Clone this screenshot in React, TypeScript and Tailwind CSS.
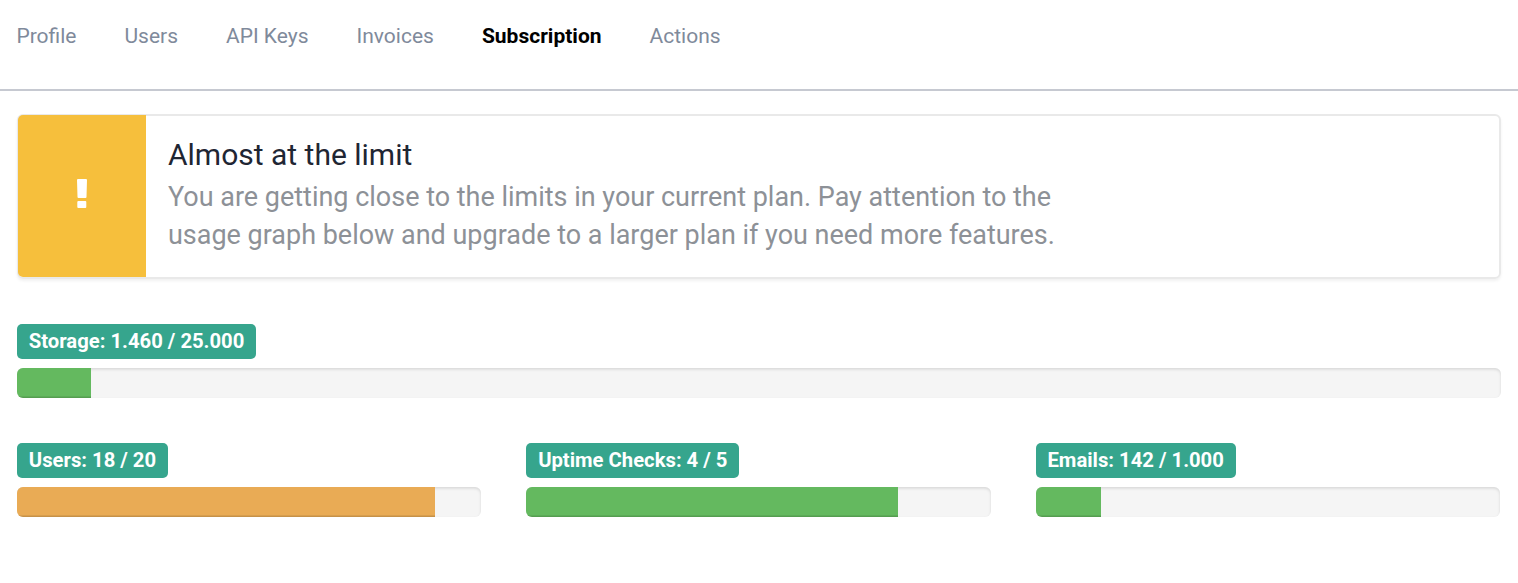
const tabs = [
  { label: 'Profile' },
  { label: 'Users' },
  { label: 'API Keys' },
  { label: 'Invoices' },
  { label: 'Subscription', active: true },
  { label: 'Actions' },
];

function Meter({ label, percent, warn = false }: { label: string; percent: number; warn?: boolean }) {
  return (
    <div>
      <span className="flex h-[35px] w-fit items-center rounded-[5px] bg-[#36a58d] px-[11.8px] text-[20.25px] leading-[35px] font-bold whitespace-nowrap text-white">
        {label}
      </span>
      <div className="mt-[9px] h-[30px] overflow-hidden rounded-[6px] bg-[#f5f5f5] shadow-[inset_0_1.5px_3px_rgba(0,0,0,0.12)]">
        <div
          className={`h-full shadow-[inset_0_-1.5px_0_rgba(0,0,0,0.15)] ${warn ? 'bg-[#e9ab55]' : 'bg-[#64b95f]'}`}
          style={{ width: `${percent}%` }}
        />
      </div>
    </div>
  );
}

export default function App() {
  return (
    <div className="h-[583px] w-full overflow-hidden bg-white font-['Roboto',sans-serif]">
      <nav className="flex h-[91px] gap-12 border-b-2 border-[#c6c9d1] pt-[20px] pl-[16.4px] text-[21px] leading-[32px] text-[#7f8a9b]">
        {tabs.map((t) => (
          <a key={t.label} className={t.active ? 'font-bold text-black' : ''}>
            {t.label}
          </a>
        ))}
      </nav>
      <main className="px-[17px] pt-[23px]">
        <section className="flex h-[165px] rounded-[6px] border-2 border-[#e9e9e9] shadow-[0_2px_3px_rgba(0,0,0,0.06)]">
          <div className="-mt-px -ml-px flex w-[128px] items-center justify-center rounded-l-[5px] bg-[#f6bf3c]">
            <svg className="mb-[5px]" width="10" height="29" viewBox="0 0 10 29" fill="white">
              <path d="M1 0h8q1 0 1 1l-.5 17q0 1-1 1h-7q-1 0-1-1L0 1q0-1 1-1Z" />
              <rect x="0.300" y="22" width="9" height="7" rx="1" />
            </svg>
          </div>
          <div className="pt-[19px] pl-[22px]">
            <h2 className="text-[30px] leading-[40px] text-[#1f2633]">Almost at the limit</h2>
            <p className="mt-[3px] text-[26.98px] leading-[38px] text-[#8d9197]">
              You are getting close to the limits in your current plan. Pay attention to the
              <br />
              usage graph below and upgrade to a larger plan if you need more features.
            </p>
          </div>
        </section>
        <div className="mt-[45px]">
          <Meter label="Storage: 1.460 / 25.000" percent={5} />
        </div>
        <div className="mt-[45px] mr-px grid grid-cols-3 gap-[45px]">
          <Meter label="Users: 18 / 20" percent={90} warn />
          <Meter label="Uptime Checks: 4 / 5" percent={80} />
          <Meter label="Emails: 142 / 1.000" percent={14} />
        </div>
      </main>
    </div>
  );
}
